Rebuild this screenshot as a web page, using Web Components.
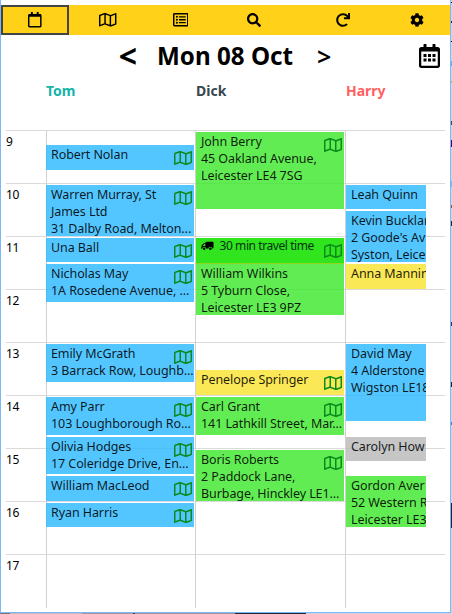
<!DOCTYPE html>
<html lang="en">
<head>
<meta charset="utf-8">
<title>Day planner</title>
<style>
  body {
    margin: 0;
    background: #fff;
    font-family: "Noto Sans", "Open Sans", sans-serif;
    overflow: hidden;
  }
</style>
</head>
<body>
<planner-window>
  <tool-bar slot="tools"></tool-bar>
  <date-nav slot="tools">Mon 08 Oct</date-nav>
  <day-planner></day-planner>
</planner-window>

<script>
const ICONS = {
  map: ['0 0 576 512', '<path d="M560.02 32c-1.96 0-3.98.37-5.96 1.16L384.01 96H384L212 35.28A64.252 64.252 0 0 0 191.76 32c-6.69 0-13.37 1.05-19.81 3.14L20.12 87.95A32.006 32.006 0 0 0 0 117.66v346.32C0 473.17 7.53 480 15.99 480c1.96 0 3.97-.37 5.96-1.16L192 416l172 60.71a63.98 63.98 0 0 0 40.05.15l151.83-52.81A31.996 31.996 0 0 0 576 394.34V48.02c0-9.19-7.53-16.02-15.98-16.02zM224 90.42l128 45.19v285.97l-128-45.19V90.42zM48 418.05V129.07l128-44.53v286.2l-.64.23L48 418.05zm480-35.13l-128 44.53V141.26l.64-.24L528 93.95v288.97z"/>'],
  calendar: ['0 0 448 512', '<path d="M400 64h-48V12c0-6.6-5.4-12-12-12h-40c-6.6 0-12 5.4-12 12v52H160V12c0-6.6-5.4-12-12-12h-40c-6.6 0-12 5.4-12 12v52H48C21.5 64 0 85.5 0 112v352c0 26.5 21.5 48 48 48h352c26.5 0 48-21.5 48-48V112c0-26.5-21.5-48-48-48zm-6 400H54c-3.3 0-6-2.7-6-6V160h352v298c0 3.3-2.7 6-6 6z"/>'],
  dates: ['0 0 448 512', '<path d="M400 64h-48V12c0-6.6-5.4-12-12-12h-40c-6.6 0-12 5.4-12 12v52H160V12c0-6.6-5.4-12-12-12h-40c-6.6 0-12 5.4-12 12v52H48C21.5 64 0 85.5 0 112v352c0 26.5 21.5 48 48 48h352c26.5 0 48-21.5 48-48V112c0-26.5-21.5-48-48-48zm-6 400H54c-3.3 0-6-2.7-6-6V160h352v298c0 3.3-2.7 6-6 6z"/><path d="M96 212h64v64H96zM192 212h64v64h-64zM288 212h64v64h-64zM96 308h64v64H96zM192 308h64v64h-64zM288 308h64v64h-64z"/>'],
  list: ['0 0 512 512', '<path fill-rule="evenodd" d="M464 32H48a48 48 0 0 0-48 48v352a48 48 0 0 0 48 48h416a48 48 0 0 0 48-48V80a48 48 0 0 0-48-48zM48 86a6 6 0 0 1 6-6h404a6 6 0 0 1 6 6v340a6 6 0 0 1-6 6H54a6 6 0 0 1-6-6z"/><path d="M204 138h208a12 12 0 0 1 12 12v20a12 12 0 0 1-12 12H204a12 12 0 0 1-12-12v-20a12 12 0 0 1 12-12zM204 234h208a12 12 0 0 1 12 12v20a12 12 0 0 1-12 12H204a12 12 0 0 1-12-12v-20a12 12 0 0 1 12-12zM204 330h208a12 12 0 0 1 12 12v20a12 12 0 0 1-12 12H204a12 12 0 0 1-12-12v-20a12 12 0 0 1 12-12z"/><circle cx="128" cy="160" r="34"/><circle cx="128" cy="256" r="34"/><circle cx="128" cy="352" r="34"/>'],
  search: ['0 0 512 512', '<path d="M505 442.7L405.3 343c-4.5-4.5-10.6-7-17-7H372c27.6-35.3 44-79.7 44-128C416 93.1 322.9 0 208 0S0 93.1 0 208s93.1 208 208 208c48.3 0 92.7-16.4 128-44v16.3c0 6.4 2.5 12.5 7 17l99.7 99.7c9.4 9.4 24.6 9.4 33.9 0l28.3-28.3c9.4-9.4 9.4-24.6.1-34zM208 336c-70.7 0-128-57.2-128-128 0-70.7 57.2-128 128-128 70.7 0 128 57.2 128 128 0 70.7-57.2 128-128 128z"/>'],
  redo: ['0 0 512 512', '<path d="M500.33 0h-47.41a12 12 0 0 0-12 12.57l4 82.76A247.42 247.42 0 0 0 256 8C119.34 8 7.9 119.53 8 256.19 8.1 393.07 119.1 504 256 504a247.1 247.1 0 0 0 166.18-63.91 12 12 0 0 0 .48-17.43l-34-34a12 12 0 0 0-16.38-.55A176 176 0 1 1 402.1 157.8l-101.53-4.87a12 12 0 0 0-12.57 12v47.41a12 12 0 0 0 12 12h200.33a12 12 0 0 0 12-12V12a12 12 0 0 0-12-12z"/>'],
  cog: ['0 0 512 512', '<path d="M487.4 315.7l-42.6-24.6c4.3-23.2 4.3-47 0-70.2l42.6-24.6c4.9-2.8 7.1-8.6 5.5-14-11.1-35.6-30-67.8-54.7-94.6-3.8-4.1-10-5.1-14.8-2.3L380.8 110c-17.9-15.4-38.5-27.3-60.8-35.1V25.8c0-5.6-3.9-10.5-9.4-11.7-36.7-8.2-74.3-7.8-109.2 0-5.5 1.2-9.4 6.1-9.4 11.7V75c-22.2 7.9-42.8 19.8-60.8 35.1L88.7 85.5c-4.9-2.8-11-1.9-14.8 2.3-24.7 26.7-43.6 58.9-54.7 94.6-1.7 5.4.6 11.2 5.5 14L67.3 221c-4.3 23.2-4.3 47 0 70.2l-42.6 24.6c-4.9 2.8-7.1 8.6-5.5 14 11.1 35.6 30 67.8 54.7 94.6 3.8 4.1 10 5.1 14.8 2.3l42.6-24.6c17.9 15.4 38.5 27.3 60.8 35.1v49.2c0 5.6 3.9 10.5 9.4 11.7 36.7 8.2 74.3 7.8 109.2 0 5.5-1.2 9.4-6.1 9.4-11.7v-49.2c22.2-7.9 42.8-19.8 60.8-35.1l42.6 24.6c4.9 2.8 11 1.9 14.8-2.3 24.7-26.7 43.6-58.9 54.7-94.6 1.5-5.5-.7-11.3-5.6-14.1zM256 336c-44.1 0-80-35.9-80-80s35.9-80 80-80 80 35.9 80 80-35.9 80-80 80z"/>'],
  truck: ['0 0 640 512', '<path fill-rule="evenodd" d="M280 32h312a48 48 0 0 1 48 48v256a48 48 0 0 1-48 48h-16a96 96 0 0 0-192 0H256a96 96 0 0 0-192 0H16a16 16 0 0 1-16-16v-32a16 16 0 0 1 16-16h16V244a48 48 0 0 1 14-34L146 110a48 48 0 0 1 34-14h52V80a48 48 0 0 1 48-48zM80 256h144V144h-44z"/><circle cx="160" cy="400" r="64"/><circle cx="480" cy="400" r="64"/>']
};

class UiIcon extends HTMLElement {
  constructor() {
    super();
    this._shadowRoot = this.attachShadow({ mode: 'open' });
  }

  connectedCallback() {
    const [viewBox, shapes] = ICONS[this.getAttribute('name')];
    this._shadowRoot.innerHTML = `
      <style>
        :host { display: inline-flex; height: 16px; }
        svg { height: 100%; width: auto; fill: currentColor; display: block; }
      </style>
      <svg viewBox="${viewBox}">${shapes}</svg>
    `;
  }
}

class PlannerWindow extends HTMLElement {
  constructor() {
    super();
    this._shadowRoot = this.attachShadow({ mode: 'open' });
    this._shadowRoot.innerHTML = `
      <style>
        :host {
          display: grid;
          grid-template-columns: 451px 1px;
          grid-template-rows: 613px 1px;
          height: 614px;
          width: 452px;
        }
        main {
          box-sizing: border-box;
          border: 1px solid #7db7f7;
          border-top: 0;
          padding-top: 5px;
          background: #fff;
          overflow: hidden;
        }
        /* slivers of the desktop showing past the window edge */
        .side {
          grid-row: 1 / 3;
          grid-column: 2;
          background: linear-gradient(#cfd3e0 0 2px, #111 0 3px, #cfd3e0 0 21px, #223 0 23px, #cfd3e0 0 41px, #111 0 42px,
            #d5d5e0 0 61px, #5ab4e0 0 66px, #d5d5e0 0 81px, #c9a860 0 83px, #d5d5e0 0 121px, #543 0 125px, #d5d5e0 0 140px, #406 0 147px,
            #d5d5e0 0 181px, #6bc3e8 0 187px, #d5d5e0 0 205px, #953 0 208px, #d5d5e0 0 221px, #322 0 226px,
            #d5d5e0 0 322px, #235 0 326px, #d5d5e0 0 382px, #222 0 387px, #d5d5e0 0 422px, #48b 0 425px, #d5d5e0 0 503px,
            #1d2433 0 528px, #d5d5e0 0);
        }
        .foot {
          background: linear-gradient(90deg, #777 0 10px, #bbb 0 82px, #999 0 133px, #444 0 135px, #999 0 235px, #1d2433 0 306px, #d0d3dc 0);
        }
      </style>
      <main>
        <slot name="tools"></slot>
        <slot></slot>
      </main>
      <div class="side"></div>
      <div class="foot"></div>
    `;
  }
}

class ToolBar extends HTMLElement {
  constructor() {
    super();
    this._shadowRoot = this.attachShadow({ mode: 'open' });
    this._shadowRoot.innerHTML = `
      <style>
        :host {
          display: grid;
          grid-template-columns: 68px 78px 67px 80px 98px 49px;
          height: 30px;
          background: #ffd119;
          color: #000;
        }
        div {
          box-sizing: border-box;
          display: flex;
          align-items: center;
          justify-content: center;
        }
        .active { border: 2px solid #444; }
        ui-icon { height: 15.5px; }
        ui-icon[name="search"], ui-icon[name="cog"], ui-icon[name="redo"] { height: 14px; }
      </style>
      <div class="active"><ui-icon name="calendar"></ui-icon></div>
      <div><ui-icon name="map"></ui-icon></div>
      <div><ui-icon name="list"></ui-icon></div>
      <div><ui-icon name="search"></ui-icon></div>
      <div><ui-icon name="redo"></ui-icon></div>
      <div><ui-icon name="cog"></ui-icon></div>
    `;
  }
}

class DateNav extends HTMLElement {
  constructor() {
    super();
    this._shadowRoot = this.attachShadow({ mode: 'open' });
    this._shadowRoot.innerHTML = `
      <style>
        :host {
          display: grid;
          grid-template-columns: 156px 138px 64px 1fr;
          align-items: center;
          height: 41px;
          padding-right: 10px;
          margin-bottom: 1px;
          font-weight: 700;
          font-size: 24.2px;
          color: #000;
          white-space: nowrap;
        }
        .prev { text-align: right; padding-right: 20px; font-size: 32px; line-height: 40px; }
        .next { padding-left: 22px; font-size: 25px; font-weight: 600; }
        ui-icon { height: 24px; justify-self: end; }
      </style>
      <span class="prev">&lt;</span>
      <span><slot></slot></span>
      <span class="next">&gt;</span>
      <ui-icon name="dates"></ui-icon>
    `;
  }
}

class PlannerEvent extends HTMLElement {
  constructor() {
    super();
    this._shadowRoot = this.attachShadow({ mode: 'open' });
  }

  set event({ start, end, color, lines, map, travel }) {
    this.style.gridRow = `${start - 129} / ${end - 129}`;
    this._shadowRoot.innerHTML = `
      <style>
        :host {
          --fill: rgba(41, 184, 255, .8);
          position: relative;
          box-sizing: border-box;
          display: block;
          min-width: 0;
          padding: 1px 0 0 5px;
          overflow: hidden;
          background: var(--fill);
          color: rgba(0, 0, 0, .88);
          font-size: 12.5px;
          letter-spacing: -.08px;
          line-height: 17px;
          white-space: nowrap;
        }
        :host(.green) { --fill: rgba(59, 231, 41, .8); }
        :host(.yellow) { --fill: rgba(250, 226, 44, .8); }
        :host(.grey) { --fill: rgba(184, 184, 184, .8); }
        :host(.travel) {
          --fill: #30e41e;
          padding: 0 0 0 5px;
          border-bottom: 1px solid #8fd61c;
          font-size: 12px;
          letter-spacing: -.42px;
          line-height: 16px;
          color: #031;
        }
        .travel-icon { height: 10px; color: #000; margin-right: 6px; vertical-align: -1px; }
        .map { position: absolute; top: 5px; right: 2px; color: #0a8c1c; }
      </style>
      ${lines.map((line) => `<div>${travel ? '<ui-icon class="travel-icon" name="truck"></ui-icon>' : ''}<span>${line}</span></div>`).join('')}
      ${map ? '<ui-icon class="map" name="map"></ui-icon>' : ''}
    `;
    if (color) this.classList.add(color);
    if (travel) this.classList.add('travel');
  }
}

class DayColumn extends HTMLElement {
  constructor() {
    super();
    this._shadowRoot = this.attachShadow({ mode: 'open' });
    this._shadowRoot.innerHTML = `
      <style>
        :host {
          display: grid;
          grid-template-rows: repeat(478, 1px);
          grid-template-columns: 148px;
          border-left: 1px solid #d2d2d2;
          min-width: 0;
        }
        :host([narrow]) { grid-template-columns: 80px; }
        :host([first]) { border-left: 0; background: linear-gradient(90deg, #d2d2d2 1px, transparent 0); }
      </style>
    `;
  }

  set events(list) {
    list.forEach((item) => {
      const el = document.createElement('planner-event');
      el.event = item;
      this._shadowRoot.appendChild(el);
    });
  }
}

const HOURS = [9, 10, 11, 12, 13, 14, 15, 16, 17];

const DAYS = [
  { name: 'Tom', color: '#12b5a8', first: true, events: [
    { start: 145, end: 170, map: true, lines: ['Robert Nolan'] },
    { start: 185, end: 236, map: true, lines: ['Warren Murray, St', 'James Ltd', '31 Dalby Road, Melton...'] },
    { start: 238, end: 262, map: true, lines: ['Una Ball'] },
    { start: 264, end: 302, map: true, lines: ['Nicholas May', '1A Rosedene Avenue, ...'] },
    { start: 344, end: 382, map: true, lines: ['Emily McGrath', '3 Barrack Row, Loughb...'] },
    { start: 397, end: 435, map: true, lines: ['Amy Parr', '103 Loughborough Ro...'] },
    { start: 437, end: 474, map: true, lines: ['Olivia Hodges', '17 Coleridge Drive, En...'] },
    { start: 476, end: 501, map: true, lines: ['William MacLeod'] },
    { start: 503, end: 527, map: true, lines: ['Ryan Harris'] }
  ] },
  { name: 'Dick', color: '#37474f', events: [
    { start: 132, end: 209, color: 'green', map: true, lines: ['John Berry', '45 Oakland Avenue,', 'Leicester LE4 7SG'] },
    { start: 238, end: 264, travel: true, map: true, lines: ['30 min travel time'] },
    { start: 264, end: 315, color: 'green', lines: ['William Wilkins', '5 Tyburn Close,', 'Leicester LE3 9PZ'] },
    { start: 370, end: 395, color: 'yellow', map: true, lines: ['Penelope Springer'] },
    { start: 397, end: 435, color: 'green', map: true, lines: ['Carl Grant', '141 Lathkill Street, Mar...'] },
    { start: 450, end: 501, color: 'green', map: true, lines: ['Boris Roberts', '2 Paddock Lane,', 'Burbage, Hinckley LE1...'] }
  ] },
  { name: 'Harry', color: '#ff5f5f', narrow: true, events: [
    { start: 185, end: 209, lines: ['Leah Quinn'] },
    { start: 211, end: 262, lines: ['Kevin Bucklan', '2 Goode\'s Av', 'Syston, Leices'] },
    { start: 264, end: 289, color: 'yellow', lines: ['Anna Mannin'] },
    { start: 344, end: 421, lines: ['David May', '4 Alderstone', 'Wigston LE18'] },
    { start: 437, end: 461, color: 'grey', lines: ['Carolyn How'] },
    { start: 476, end: 527, color: 'green', lines: ['Gordon Aver', '52 Western R', 'Leicester LE3'] }
  ] }
];

class DayPlanner extends HTMLElement {
  constructor() {
    super();
    this._shadowRoot = this.attachShadow({ mode: 'open' });
    this._shadowRoot.innerHTML = `
      <style>
        :host { display: block; padding: 0 5px; }
        header, .columns {
          display: grid;
          grid-template-columns: 40px 149px 150px 100px;
        }
        header {
          height: 53px;
          align-items: start;
          font-size: 14px;
          font-weight: 700;
          line-height: 19px;
          padding-top: 4px;
          box-sizing: border-box;
        }
        header span:nth-child(n+3) { padding-left: 1px; }
        .board { display: grid; }
        .hours, .columns { grid-area: 1 / 1; min-width: 0; }
        .hours { display: grid; grid-auto-rows: 53px; height: 478px; overflow: hidden; }
        .hours div {
          box-sizing: border-box;
          border-top: 1px solid #dadada;
          padding-top: 2px;
          font-size: 12px;
          letter-spacing: -.4px;
          line-height: 17px;
          color: #000;
        }
      </style>
      <header><span></span></header>
      <div class="board">
        <div class="hours"></div>
        <div class="columns"><span></span></div>
      </div>
    `;

    const header = this._shadowRoot.querySelector('header');
    const columns = this._shadowRoot.querySelector('.columns');
    this._shadowRoot.querySelector('.hours').innerHTML = HOURS.map((hour) => `<div>${hour}</div>`).join('');

    DAYS.forEach((day) => {
      const title = document.createElement('span');
      title.textContent = day.name;
      title.style.color = day.color;
      header.appendChild(title);

      const column = document.createElement('day-column');
      column.toggleAttribute('narrow', !!day.narrow);
      column.toggleAttribute('first', !!day.first);
      column.events = day.events;
      columns.appendChild(column);
    });
  }
}

customElements.define('ui-icon', UiIcon);
customElements.define('planner-event', PlannerEvent);
customElements.define('day-column', DayColumn);
customElements.define('tool-bar', ToolBar);
customElements.define('date-nav', DateNav);
customElements.define('day-planner', DayPlanner);
customElements.define('planner-window', PlannerWindow);
</script>
</body>
</html>
